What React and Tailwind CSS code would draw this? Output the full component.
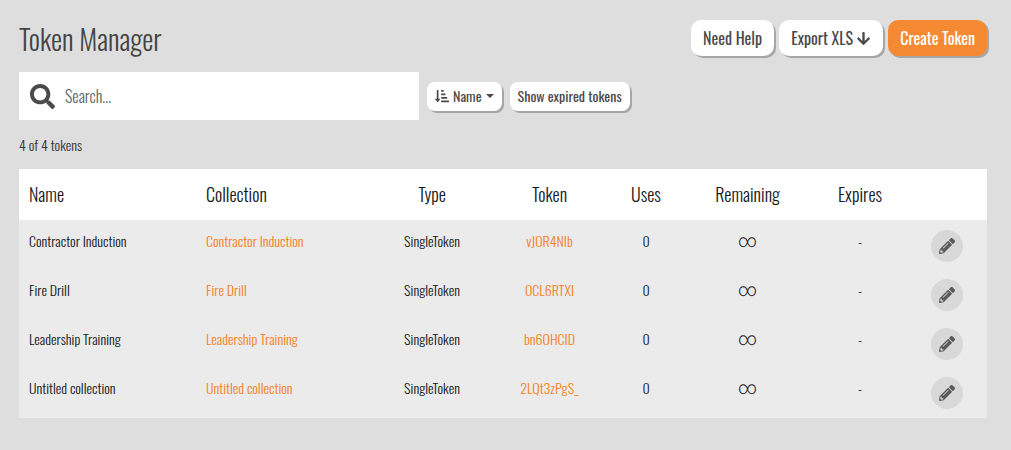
import { useState } from 'react';
import { FaArrowDown, FaPencilAlt, FaSearch, FaSortAmountDownAlt } from 'react-icons/fa';

const tokens = [
  { name: 'Contractor Induction', type: 'SingleToken', token: 'vJOR4NIb', uses: 0 },
  { name: 'Fire Drill', type: 'SingleToken', token: 'OCL6RTXI', uses: 0 },
  { name: 'Leadership Training', type: 'SingleToken', token: 'bn6OHCID', uses: 0 },
  { name: 'Untitled collection', type: 'SingleToken', token: '2LQt3zPgS_', uses: 0 }
];

function TokenRow({ item }) {
  return (
    <tr className="align-top leading-[22px]">
      <td className="pt-[10px] px-[10px]">{item.name}</td>
      <td className="pt-[10px] px-[10px]">
        <a href="#collection" className="text-[#f68020]">{item.name}</a>
      </td>
      <td className="pt-[10px] text-center">{item.type}</td>
      <td className="pt-[10px] text-center">
        <a href="#token" className="text-[#f68020]">{item.token}</a>
      </td>
      <td className="pt-[10px] text-center">{item.uses}</td>
      <td className="pt-[10px] text-center font-['Roboto',sans-serif] text-lg leading-[22px]">∞</td>
      <td className="pt-[10px] text-center">-</td>
      <td className="pt-[10px] pr-[2px] pb-[7px]">
        <button
          type="button"
          aria-label="Edit"
          className="mx-auto flex size-8 items-center justify-center rounded-full bg-[#d8d8d8] text-[#5a5a5a]"
        >
          <FaPencilAlt size={16} />
        </button>
      </td>
    </tr>
  );
}

function App() {
  const [search, setSearch] = useState('');

  const visible = tokens.filter(item =>
    item.name.toLowerCase().includes(search.toLowerCase())
  );

  return (
    <div className="min-h-screen bg-[#dedede] pt-5 pr-6 pb-8 pl-[19px] font-['Oswald','Liberation_Sans_Narrow',sans-serif] text-sm font-light text-[#16191c]">
      <header className="flex items-start justify-between">
        <h1 className="text-[28px] leading-[38px] font-light text-[#444]">Token Manager</h1>
        <div className="flex gap-[5px] text-base font-normal text-[#4a4a4a]">
          <button type="button" className="h-9 rounded-[10px] bg-white px-3 shadow-[2px_2px_0_#a6a6a6]">
            Need Help
          </button>
          <button type="button" className="flex h-9 items-center gap-[3px] rounded-[10px] bg-white px-3 shadow-[2px_2px_0_#a6a6a6]">
            Export XLS <FaArrowDown size={15} />
          </button>
          <button type="button" className="h-9 rounded-[10px] bg-[#f68a33] px-3 text-white shadow-[2px_2px_0_#a6a6a6]">
            Create Token
          </button>
        </div>
      </header>

      <div className="mt-[14px] flex items-center gap-2">
        <label className="flex h-12 w-[400px] items-center gap-[10px] bg-white pl-[11px] text-[#4a4a4a]">
          <FaSearch size={25} />
          <input
            type="text"
            aria-label="Search"
            value={search}
            onChange={(e) => setSearch(e.target.value)}
            placeholder="Search..."
            className="min-w-0 flex-1 text-base outline-none placeholder:text-[#5c656d]"
          />
        </label>
        <div className="flex gap-2 text-sm font-normal text-[#4a4a4a]">
          <button type="button" className="flex h-[29px] items-center gap-1 rounded-lg bg-white px-2 shadow-[2px_2px_0_#a6a6a6]">
            <FaSortAmountDownAlt size={14} />
            Name
            <span className="border-x-4 border-t-4 border-x-transparent border-t-[#4a4a4a]" />
          </button>
          <button type="button" className="h-[29px] rounded-lg bg-white px-2 shadow-[2px_2px_0_#a6a6a6]">
            Show expired tokens
          </button>
        </div>
      </div>

      <p className="mt-4 leading-[18px] text-[#333]">
        {visible.length} of {tokens.length} tokens
      </p>

      <div className="mt-[15px] bg-[#ebebeb] pb-[2px]">
        <table className="w-full table-fixed">
          <thead className="bg-white text-lg">
            <tr className="h-[51px]">
              <th className="px-[10px] pb-[2px] text-left font-light">Name</th>
              <th className="px-[10px] pb-[2px] text-left font-light">Collection</th>
              <th className="w-[118px] pb-[2px] font-light">Type</th>
              <th className="w-[117px] pb-[2px] font-light">Token</th>
              <th className="w-[76px] pb-[2px] font-light">Uses</th>
              <th className="w-[127px] pb-[2px] font-light">Remaining</th>
              <th className="w-[98px] pb-[2px] font-light">Expires</th>
              <th className="w-[78px]" aria-label="Actions"></th>
            </tr>
          </thead>
          <tbody>
            {visible.map(item => (
              <TokenRow key={item.token} item={item} />
            ))}
          </tbody>
        </table>
      </div>
    </div>
  );
}

export default App;
